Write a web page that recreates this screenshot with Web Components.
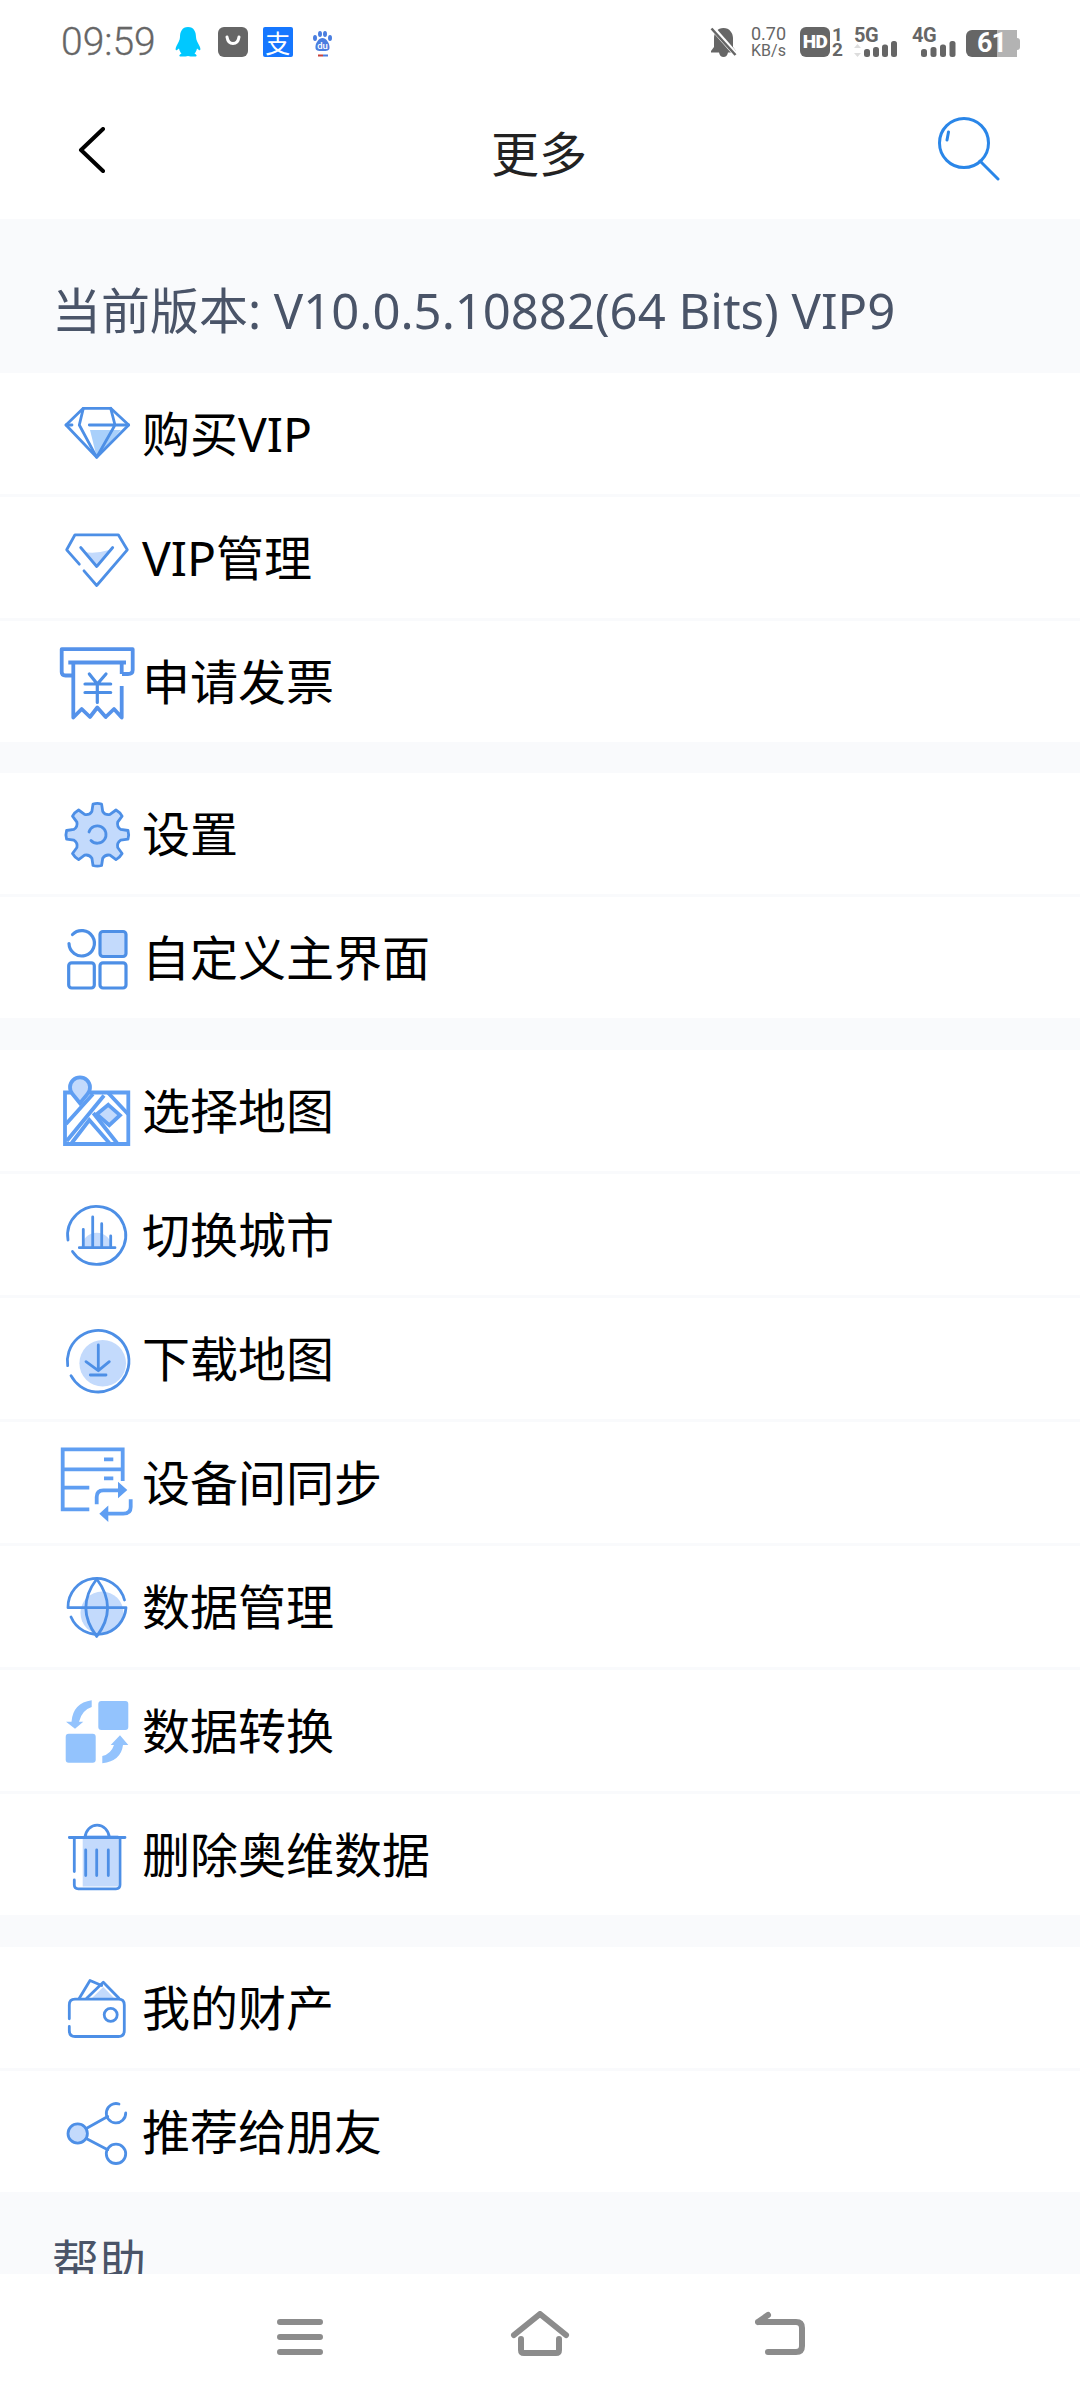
<!DOCTYPE html>
<html>
<head>
<meta charset="utf-8">
<style>
  html, body { margin: 0; padding: 0; background: #fff; }
  body { width: 1080px; height: 2400px; overflow: hidden; display: flex; flex-direction: column; font-family: "Noto Sans", "Noto Sans CJK SC", sans-serif; }
  .scroll { flex: 1; min-height: 0; overflow: hidden; background: #f9fafc; }
</style>
</head>
<body>
<status-bar></status-bar>
<nav-header>更多</nav-header>
<div class="scroll">
  <section-title style="--top:58px;--height:154px;--size:49px">当前版本: V10.0.5.10882(64 Bits) VIP9</section-title>
  <menu-group style="--gap:31px">
    <menu-row><menu-icon slot="icon" name="diamond"></menu-icon>购买VIP</menu-row>
    <menu-row><menu-icon slot="icon" name="vip"></menu-icon>VIP管理</menu-row>
    <menu-row><menu-icon slot="icon" name="receipt"></menu-icon>申请发票</menu-row>
  </menu-group>
  <menu-group style="--gap:32px">
    <menu-row><menu-icon slot="icon" name="gear"></menu-icon>设置</menu-row>
    <menu-row><menu-icon slot="icon" name="grid"></menu-icon>自定义主界面</menu-row>
  </menu-group>
  <menu-group style="--gap:32px">
    <menu-row><menu-icon slot="icon" name="map"></menu-icon>选择地图</menu-row>
    <menu-row><menu-icon slot="icon" name="city"></menu-icon>切换城市</menu-row>
    <menu-row><menu-icon slot="icon" name="download"></menu-icon>下载地图</menu-row>
    <menu-row><menu-icon slot="icon" name="sync"></menu-icon>设备间同步</menu-row>
    <menu-row><menu-icon slot="icon" name="globe"></menu-icon>数据管理</menu-row>
    <menu-row><menu-icon slot="icon" name="convert"></menu-icon>数据转换</menu-row>
    <menu-row><menu-icon slot="icon" name="trash"></menu-icon>删除奥维数据</menu-row>
  </menu-group>
  <menu-group style="--gap:0px">
    <menu-row><menu-icon slot="icon" name="wallet"></menu-icon>我的财产</menu-row>
    <menu-row><menu-icon slot="icon" name="share"></menu-icon>推荐给朋友</menu-row>
  </menu-group>
  <section-title style="--top:36px;--height:130px;--size:47px">帮助</section-title>
</div>
<bottom-nav></bottom-nav>

<script>
// gear outline, 8 teeth round (cx, cy)
function gearPath(cx, cy, rOut, rIn) {
  const pt = (r, deg) => {
    const a = (deg - 90) * Math.PI / 180;
    return (cx + r * Math.cos(a)).toFixed(1) + ' ' + (cy + r * Math.sin(a)).toFixed(1);
  };
  let d = '';
  for (let i = 0; i < 8; i++) {
    const a = i * 45;
    d += (i ? 'L' : 'M') + pt(rIn, a - 13) + ' L' + pt(rOut, a - 8) + ' Q' + pt(rOut + 1, a) + ' ' + pt(rOut, a + 8) + ' L' + pt(rIn, a + 13) + ' Q' + pt(rIn - 3, a + 22.5) + ' ' + pt(rIn, a + 32);
  }
  return d + 'Z';
}

const ICONS = {
  diamond: `
    <path class="f2" d="M34 36H65L40.7 63Z"/>
    <path d="M27.3 14.3H54.7L72.7 31 40.7 63.3 10 31Z"/>
    <path d="M27.3 14.3 23.3 31 40.7 63.3 59 31 54.7 14.3M10 31H16M33.3 31H72.7"/>`,
  vip: `
    <path class="f" d="M28 34Q40 36 53 32L40.7 48.5Z"/>
    <path d="M28 52.8 40.7 67.5 71.3 31.8 62.3 16.8H19L10.7 31.8 23.3 46.2"/>
    <path d="M24.7 29.5 40.7 48.5 56.7 29.5"/>`,
  receipt: `
    <g class="b">
    <path d="M17.3 33.5H9.5Q5.7 33.5 5.7 30V7.2H76.7V28Q76.7 32 72 32H66"/>
    <path d="M12.3 20.5H70"/>
    <path d="M17.3 20.5V75.5L25.7 67 34 75 41.3 65.5 49.7 75 58 67 65.7 75.5V44M65.7 32V20.5"/>
    </g>
    <path class="thick" d="M33.3 32 41.3 42 50 32M29 42H54.7M29 50.5H54.7M41.3 42V60.5"/>`,
  gear: `
    <path class="f" d="${gearPath(41.3, 40.8, 31, 24)}"/>
    <path d="${gearPath(41.3, 40.8, 31, 24)}"/>
    <path d="M35 46.5A8.7 8.7 0 1 0 33 38"/>`,
  grid: `
    <path class="thick" d="M16.5 16.5A12.7 12.7 0 1 1 13 25.5"/>
    <rect class="f" x="44" y="13.5" width="26" height="25" rx="3"/>
    <rect class="thick" x="44" y="13.5" width="26" height="25" rx="3"/>
    <rect class="thick" x="12.7" y="44.8" width="25.6" height="25.2" rx="3"/>
    <rect class="thick" x="44" y="44.8" width="26" height="25.2" rx="3"/>`,
  map: `
    <g class="l">
    <path d="M15 21.500H9V73H72.300V21.500H33"/>
    <path d="M10 53 37 23M10.700 70 48 24.500 M15.700 72 33.300 49 53.300 72M37.300 42 61 72M52.300 22 72 43"/>
    <path class="f w" d="M52.300 33.800 64 44.200 53.300 54.200 40.700 43.200Z"/>
    <path class="f w" d="M24 32.200 16.500 23A10 10 0 1 1 31.500 23Z"/>
    </g>`,
  city: `
    <path class="f" d="M25.700 52.700A15 15 0 0 1 55.700 52.700Z"/>
    <path d="M12 45A29 29 0 1 1 16.500 56.500"/>
    <path d="M23.300 52.700H59M27.300 52.700V34.300M36.700 52.700V22M45.700 52.700V28.700M54.700 52.700V41"/>`,
  download: `
    <circle class="f" cx="46.700" cy="44.300" r="23.300"/>
    <path d="M11.700 46.700A30.800 30.800 0 1 1 15 56.700"/>
    <path d="M42.300 26V51.700M30 42.700 42.300 51.700 53.300 42.700M34.300 56H50"/>`,
  sync: `
    <g class="l">
    <path d="M66.700 38V6.300H6.700V66.300H33.300M6.700 26.300H66.700M6.700 44.700H33.300M48 16.300H57.300M48 35.300H57.300"/>
    <path d="M40.700 61.300V54Q40.700 47.300 47.300 47.300H63M74.700 56.300V64Q74.700 70.700 67.300 70.700H52"/>
    </g>
    <path class="solid" d="M62 38.700 71.300 47 62 55.300ZM52.300 62.400 43.300 70.700 52.300 79Z"/>`,
  globe: `
    <circle class="f" cx="46" cy="46" r="21.500"/>
    <path d="M68.500 33A28.700 28.700 0 0 0 12 40.700H70A28.700 28.700 0 0 1 15 50"/>
    <path d="M40.700 12Q19 40.700 40.700 69.400Q62.400 40.700 40.700 12Z"/>`,
  convert: `
    <rect class="solid2" x="42.300" y="10" width="30" height="29" rx="3"/>
    <rect class="solid2" x="9.700" y="42.700" width="30" height="29" rx="3"/>
    <path class="solid2" d="M19 37.700 10 30.700H15.500Q17 12 35.700 9.300V16Q26 19 23 30.700H27.300Z"/>
    <path class="solid2" d="M64 44.300 72.300 54H67Q65 70 46.300 72.300V65Q55 63 58 54H54.700Z"/>`,
  trash: `
    <path class="f" d="M26.700 24Q26.700 20 30 20H62.300V71.500H26.700Z"/>
    <path d="M13.300 22.500H69M29 22.500A12.200 13.700 0 0 1 53.300 22.500"/>
    <path d="M18.300 22.500V56.500M18.300 65V69.800Q18.300 73.800 22.300 73.800H60Q64 73.800 64 69.800V22.500"/>
    <path d="M29.700 35V60.500M40.700 35V60.500M52.300 35V60.500"/>`,
  wallet: `
    <path class="f" d="M36 30 47.300 19 58 30Z"/>
    <path d="M23.300 30.200 34 12.500 45.700 17.500M30.700 30.200 47.300 14.200 63 30.200"/>
    <path d="M13.300 50.800V37Q13.300 31.200 19 31.200H62.500Q68.300 31.200 68.300 37V62.500Q68.300 68.500 62.500 68.500H19Q13.300 68.500 13.300 62.500V58.500"/>
    <circle cx="54.700" cy="46.800" r="6.500"/>`,
  share: `
    <circle class="f" cx="21.700" cy="41.500" r="9.700"/>
    <circle cx="21.700" cy="41.500" r="9.700"/>
    <path d="M63 12A9.700 9.700 0 1 0 69.700 21"/>
    <circle cx="60" cy="61.800" r="9.700"/>
    <path d="M30.700 36.200 51.700 24.500M30.700 46.800 51.700 57.800"/>`
};

class MenuIcon extends HTMLElement {
  connectedCallback() {
    this.attachShadow({ mode: 'open' });
    this.shadowRoot.innerHTML = `
      <style>
        :host { display: block; width: 80px; height: 80px; flex: none; }
        svg { display: block; overflow: visible; }
        path, circle, rect { fill: none; stroke: #4d8fe6; stroke-width: 2.8; stroke-linecap: round; stroke-linejoin: round; }
        .thick { stroke-width: 3.2; }
        .l path, .b path { stroke: #5f9ef2; stroke-width: 3.800; stroke-linecap: butt; stroke-linejoin: miter; }
        .b path { stroke: #5592ea; stroke-linejoin: round; }
        .f, .l .f { fill: #c3dafc; stroke: none; }
        .l .w { stroke: #5f9ef2; }
        .f2 { fill: #a9d0fb; stroke: none; }
        .solid { fill: #5f9ef2; stroke: none; }
        .solid2 { fill: #93c3fd; stroke: none; }
      </style>
      <svg width="80" height="80" viewBox="0 0 80 80">${ICONS[this.getAttribute('name')]}</svg>`;
  }
}
customElements.define('menu-icon', MenuIcon);

const rowTpl = document.createElement('template');
rowTpl.innerHTML = `
  <style>
    :host { display: flex; align-items: center; gap: 6px; box-sizing: border-box; height: 124px; padding-left: 56px; background: #fff; border-bottom: 3px solid #f9fafc; color: #000; font: 48px/1 "Noto Sans", "Noto Sans CJK SC", sans-serif; }
    :host(:last-child) { height: 121px; border-bottom: 0; }
    .label { white-space: nowrap; }
  </style>
  <slot name="icon"></slot>
  <div class="label"><slot></slot></div>
`;
class MenuRow extends HTMLElement {
  connectedCallback() {
    this.attachShadow({ mode: 'open' }).appendChild(rowTpl.content.cloneNode(true));
  }
}
customElements.define('menu-row', MenuRow);

class MenuGroup extends HTMLElement {
  connectedCallback() {
    this.attachShadow({ mode: 'open' }).innerHTML = `
      <style>
        :host { display: block; margin-bottom: var(--gap); }
      </style>
      <slot></slot>`;
  }
}
customElements.define('menu-group', MenuGroup);

class SectionTitle extends HTMLElement {
  connectedCallback() {
    this.attachShadow({ mode: 'open' }).innerHTML = `
      <style>
        :host { display: block; box-sizing: border-box; height: var(--height); padding: var(--top) 0 0 52px; color: #4a5468; font: var(--size)/66px "Noto Sans", "Noto Sans CJK SC", sans-serif; white-space: nowrap; }
      </style>
      <slot></slot>`;
  }
}
customElements.define('section-title', SectionTitle);

class NavHeader extends HTMLElement {
  connectedCallback() {
    this.attachShadow({ mode: 'open' }).innerHTML = `
      <style>
        :host { display: grid; grid-template-columns: 1fr auto 1fr; align-items: center; height: 139px; padding: 0 80px 0 78px; background: #fff; }
        .title { color: #222; font: 48px/1 "Noto Sans CJK SC", sans-serif; margin-top: 2px; }
        svg { display: block; }
        .search { justify-self: end; }
      </style>
      <svg width="28" height="46" viewBox="0 0 28 46"><path d="M25 2 3 23 25 44" fill="none" stroke="#000" stroke-width="4" stroke-linecap="round" stroke-linejoin="round"/></svg>
      <div class="title"><slot></slot></div>
      <svg class="search" width="62" height="66" viewBox="0 0 62 66"><g fill="none" stroke="#2a86e8" stroke-width="3" stroke-linecap="round"><circle cx="26" cy="26" r="24.500"/><path d="M42 44 60 62"/><path d="M9 23 10.500 15"/></g></svg>`;
  }
}
customElements.define('nav-header', NavHeader);

class StatusBar extends HTMLElement {
  connectedCallback() {
    this.attachShadow({ mode: 'open' }).innerHTML = `
      <style>
        :host { display: flex; align-items: flex-start; justify-content: space-between; box-sizing: border-box; height: 80px; padding: 27px 60px 0 61px; background: #fff; color: #666; font-family: Roboto, sans-serif; }
        .side { display: flex; align-items: center; height: 30px; }
        .time { font-size: 39px; font-weight: 300; line-height: 30px; margin-right: 19px; -webkit-text-stroke: 0.3px #666; }
        svg { display: block; flex: none; }
        .alipay { width: 30px; height: 30px; margin-left: 15px; background: #1677ff; border-radius: 2px; color: #fff; font: 25px/30px "Noto Sans CJK SC", sans-serif; text-align: center; }
        .speed { width: 35px; margin-left: 14px; text-align: center; }
        .speed div { line-height: 15px; }
        .speed .v { font-size: 18px; }
        .speed .u { font-size: 16px; margin-top: 2px; }
        .hd { width: 30px; height: 30px; margin-left: 14px; background: #666; border-radius: 6px; color: #fff; font: 900 19px/30px Roboto, sans-serif; text-align: center; letter-spacing: -0.5px; }
        .slots { margin-left: 2px; width: 10px; font: 700 19px/15px Roboto, sans-serif; text-align: center; }
        .net { position: relative; width: 44px; height: 30px; }
        .net b { position: absolute; top: 0; left: 0; font: 700 20px/16px Roboto, sans-serif; letter-spacing: -0.5px; }
        .net svg { position: absolute; left: 0; top: 0; }
        .battery { display: flex; align-items: center; justify-content: center; width: 51px; height: 27px; margin: 3px 0 0 10px; border-radius: 6px 0 0 6px; overflow: hidden; background: linear-gradient(90deg, #666 61%, #b3b3b3 61%); color: #fff; font: 700 27px/27px Roboto, sans-serif; letter-spacing: -1px; }
        .nub { width: 3px; height: 12px; margin-top: 3px; background: #b3b3b3; border-radius: 0 3px 3px 0; }
      </style>
      <div class="side">
        <div class="time">09:59</div>
        <svg width="26" height="30" viewBox="0 0 26 30"><path fill="#00c8ff" d="M13 0C7 0 5 5 5 10 5 13 3 16 1.500 19 0 22 .5 24 2 23L4 21.500C4.500 24 5.500 25.500 6.500 26.500 4 27.500 3.500 29.500 6 29.500H10.500Q13 28.500 15.500 29.500H20C22.500 29.500 22 27.500 19.500 26.500 20.500 25.500 21.500 24 22 21.500L24 23C25.500 24 26 22 24.500 19 23 16 21 13 21 10 21 5 19 0 13 0Z"/></svg>
        <svg width="30" height="30" viewBox="0 0 30 30" style="margin-left:17px"><rect width="30" height="30" rx="6" fill="#666"/><path d="M9 10Q10 16.500 15 16.500T21 10" fill="none" stroke="#fff" stroke-width="3" stroke-linecap="round"/></svg>
        <div class="alipay">支</div>
        <svg width="19" height="26" viewBox="0 0 19 26" style="margin:4px 0 0 20px"><g fill="#4a7ee0"><ellipse cx="2" cy="7" rx="2" ry="3"/><ellipse cx="7" cy="3" rx="2" ry="3"/><ellipse cx="12" cy="3" rx="2" ry="3"/><ellipse cx="17" cy="7" rx="2" ry="3"/><path d="M9.500 7C6 7 2 12 2.500 17 2.500 19.500 5 20 9.500 20S16.500 19.500 16.500 17C17 12 13 7 9.500 7Z"/></g><text x="9.500" y="18" font-family="Roboto, sans-serif" font-size="9.500" font-weight="500" fill="#fff" text-anchor="middle">du</text><rect x="5" y="23.500" width="5" height="2" fill="#c8413b"/><rect x="10" y="23.500" width="5" height="2" fill="#4a7ee0"/></svg>
      </div>
      <div class="side">
        <svg width="27" height="30" viewBox="0 0 26 30"><path fill="#666" d="M13 1C7 1 3.500 6 3.500 11V20L.5 24V25.500H8.500Q9.500 30 13 30T17.500 25.500H25.500V24L22.500 20V11C22.500 6 19 1 13 1Z"/><path d="M2 1 25 27" stroke="#fff" stroke-width="5"/><path d="M1 1.500 25 28" stroke="#666" stroke-width="2.500"/></svg>
        <div class="speed"><div class="v">0.70</div><div class="u">KB/s</div></div>
        <div class="hd">HD</div>
        <div class="slots"><div>1</div><div>2</div></div>
        <div class="net" style="margin-left:12px"><b>5G</b>
          <svg width="44" height="30" viewBox="0 0 44 30"><g fill="#ddd"><path d="M3.500 17 7 21H0ZM3.500 30 0 26H7Z"/></g><g fill="#666"><rect x="10" y="22" width="6" height="8" rx="2.500"/><rect x="19" y="20" width="6" height="10" rx="2.500"/><rect x="28" y="17.500" width="6" height="12.500" rx="2.500"/><rect x="37" y="14" width="6" height="16" rx="2.500"/></g></svg>
        </div>
        <div class="net" style="margin-left:14px"><b>4G</b>
          <svg width="44" height="30" viewBox="0 0 44 30"><g fill="#666"><rect x="9" y="22" width="6" height="8" rx="2.500"/><rect x="18.500" y="20" width="6" height="10" rx="2.500"/><rect x="28" y="17.500" width="6" height="12.500" rx="2.500"/><rect x="37.500" y="14" width="6" height="16" rx="2.500"/></g></svg>
        </div>
        <div class="battery">61</div><div class="nub"></div>
      </div>`;
  }
}
customElements.define('status-bar', StatusBar);

class BottomNav extends HTMLElement {
  connectedCallback() {
    this.attachShadow({ mode: 'open' }).innerHTML = `
      <style>
        :host { display: flex; justify-content: center; flex: none; height: 126px; background: #fff; }
        .btn { width: 240px; display: flex; justify-content: center; padding-top: 37px; box-sizing: border-box; }
        svg { display: block; }
        path { fill: none; stroke: #8c8c8c; stroke-width: 6; stroke-linecap: round; stroke-linejoin: round; }
      </style>
      <div class="btn"><svg width="46" height="46" viewBox="0 0 46 46"><path d="M3 11H43M3 26H43M3 41H43"/></svg></div>
      <div class="btn"><svg width="60" height="46" viewBox="0 0 60 46"><path d="M4 24 30 3 56 24M11 28V39Q11 42 14 42H46Q49 42 49 39V28"/></svg></div>
      <div class="btn"><svg width="50" height="46" viewBox="0 0 50 46"><path d="M3 11H41Q47 11 47 17V35Q47 41 41 41H13M3 11 13 4"/></svg></div>`;
  }
}
customElements.define('bottom-nav', BottomNav);
</script>
</body>
</html>
